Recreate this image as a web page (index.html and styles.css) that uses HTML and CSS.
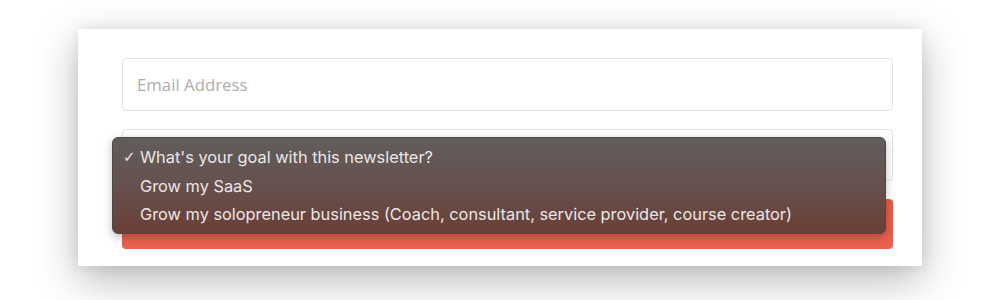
FILE: index.html
```html
<!DOCTYPE html>
<html>
<head>
<meta charset="utf-8">
<link rel="stylesheet" href="styles.css">
</head>
<body>
<div class="page">
  <form class="card">
    <div class="field">Email Address</div>
    <div class="field select"></div>
    <div class="button"></div>
  </form>
  <ul class="menu">
    <li class="opt checked"><span class="check">✓</span>What's your goal with this newsletter?</li>
    <li class="opt"><span class="check"></span>Grow my SaaS</li>
    <li class="opt"><span class="check"></span>Grow my solopreneur business (Coach, consultant, service provider, course creator)</li>
  </ul>
</div>
</body>
</html>
```
FILE: styles.css
```css
html, body {
  margin: 0;
  padding: 0;
  background: #ffffff;
}
.page {
  position: relative;
  width: 1000px;
  height: 300px;
  overflow: hidden;
  padding-top: 29px;
  box-sizing: border-box;
}
.card {
  margin: 0 0 0 78px;
  width: 844px;
  height: 237px;
  box-sizing: border-box;
  background: #ffffff;
  padding: 29px 29px 0 44px;
  display: flex;
  flex-direction: column;
  gap: 18px;
  box-shadow: 0 14px 40px rgba(0,0,0,0.28), 0 0 14px rgba(0,0,0,0.08);
}
.field {
  height: 53px;
  box-sizing: border-box;
  border: 1px solid #e3e3e3;
  border-radius: 4px;
  padding: 0 14px;
  display: flex;
  align-items: center;
  font-family: "Open Sans", sans-serif;
  font-size: 16.8px;
  color: #adadad;
}
.select {
  height: 52px;
}
.button {
  height: 50px;
  border-radius: 4px;
  background: linear-gradient(#e85a45, #e9624e);
}
.menu {
  position: absolute;
  left: 112px;
  top: 137px;
  width: 774px;
  height: 97px;
  box-sizing: border-box;
  margin: 0;
  padding: 5px 0 0 0;
  list-style: none;
  border-radius: 6px;
  border: 1px solid #4d4848;
  background: linear-gradient(#615d5c 0%, #655250 45%, #6a3f36 100%);
  box-shadow: 0 3px 10px rgba(0,0,0,0.25);
  font-family: "Inter", sans-serif;
  font-size: 16.35px;
  color: #ebe7e6;
}
.opt {
  height: 28.5px;
  display: flex;
  align-items: center;
}
.check {
  width: 27px;
  padding-left: 10px;
  box-sizing: border-box;
  font-family: "DejaVu Sans", sans-serif;
  font-size: 15px;
}
```
